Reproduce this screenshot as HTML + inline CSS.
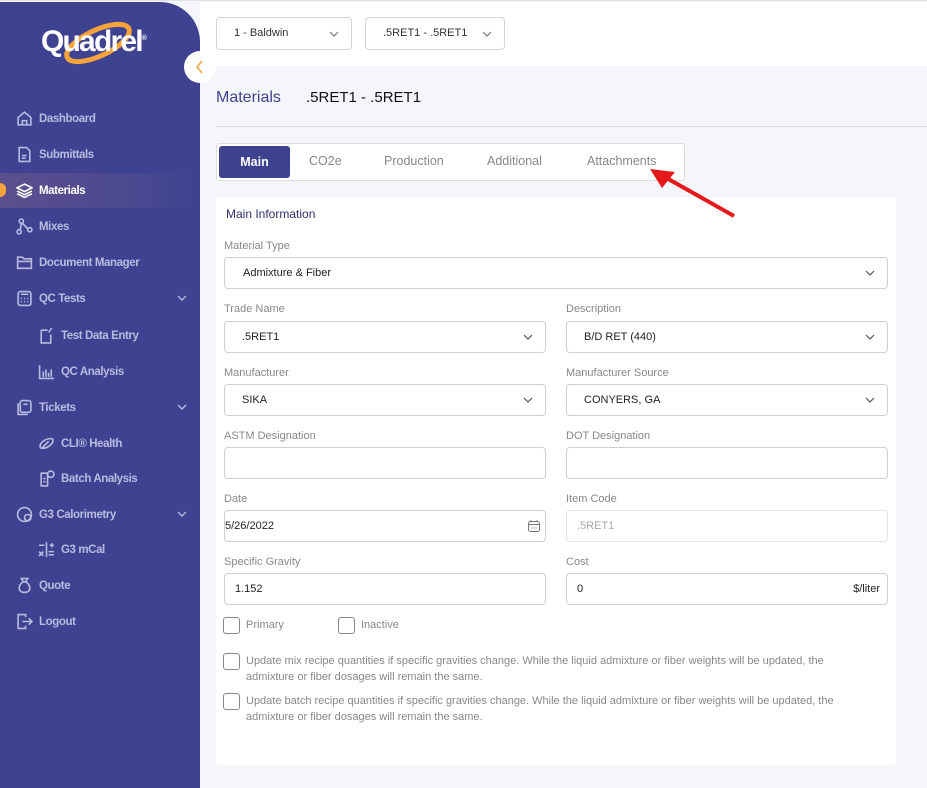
<!DOCTYPE html>
<html><head><meta charset="utf-8"><style>
*{box-sizing:border-box;margin:0;padding:0}
body{width:927px;height:786px;overflow:hidden;background:#f4f6f9;font-family:"Liberation Sans",sans-serif;position:relative;border-top:1px solid #e2e2e2}
.sb{position:absolute;left:0;top:1px;width:200px;height:786px;background:#3e4291;border-top-right-radius:40px}
.abs{position:absolute}
.nav{position:absolute;left:16px;color:#b9bbe0;font-size:11.5px;font-weight:bold;letter-spacing:-.4px;display:flex;align-items:center;gap:6px}
.nav svg{width:17px;height:17px;stroke:#b9bbe0;fill:none;stroke-width:1.5}
.sub{left:38px}
.chev{position:absolute;left:177px;width:10px;height:6px}
.top{position:absolute;left:200px;top:1px;width:727px;height:64px;background:#fff}
.dd{position:absolute;top:16px;height:33px;border:1px solid #d4d4d4;border-radius:4px;background:#fff;font-size:11px;color:#333;padding:9px 0 0 17px}
.card{position:absolute;left:216px;top:196px;width:680px;height:568px;background:#fff;border-radius:4px}
.lbl{position:absolute;font-size:11px;color:#888}
.inp{position:absolute;height:32px;border:1px solid #cfcfcf;border-radius:4px;background:#fff;font-size:11px;color:#222;padding:9px 0 0 17px}
.ca{position:absolute;right:12px;top:12px;width:10px;height:6px}
.cb{position:absolute;width:17px;height:17px;border:1.3px solid #888;border-radius:3px}
.ct{position:absolute;font-size:11px;color:#888;line-height:16px}
</style></head><body>
<div class="sb"></div>
<svg class="abs" style="left:58px;top:12px" width="80" height="60" viewBox="0 0 80 60"><ellipse cx="40" cy="30" rx="34" ry="13" transform="rotate(-25 40 30)" fill="none" stroke="#f5a33a" stroke-width="5"/></svg>
<div class="abs" style="left:41px;top:24px;font-size:30px;font-weight:bold;color:#fff;letter-spacing:-1.8px">Quadrel<sup style="font-size:7px;letter-spacing:0">®</sup></div>
<div class="abs" style="left:184px;top:50px;width:32px;height:32px;border-radius:50%;background:#fff;z-index:3"><svg width="32" height="32"><path d="M18 10 L13 16 L18 22" fill="none" stroke="#f5a33a" stroke-width="1.5"/></svg></div>
<div class="abs" style="left:0;top:172px;width:200px;height:35px;background:linear-gradient(90deg,#5b4f8e,#4a4890 70%,#3e4291)"></div>
<div class="abs" style="left:-6px;top:182px;width:12px;height:14px;border-radius:6px;background:#f5a33a"></div>
<div class="nav" style="top:109px"><svg viewBox="0 0 16 16"><path d="M2 7 L8 2 L14 7 V14 H2Z M6 14 V10 H10 V14"/></svg>Dashboard</div>
<div class="nav" style="top:145px"><svg viewBox="0 0 16 16"><path d="M3 1.5 H10 L13 4.5 V14.5 H3Z M5.5 9 H10 M5.5 11.5 H9"/></svg>Submittals</div>
<div class="nav" style="top:181px;color:#fff"><svg viewBox="0 0 16 16" style="stroke:#fff"><path d="M8 2 L15 5.5 L8 9 L1 5.5Z M1 8.5 L8 12 L15 8.5 M1 11 L8 14.5 L15 11"/></svg>Materials</div>
<div class="nav" style="top:217px"><svg viewBox="0 0 16 16"><circle cx="5" cy="3" r="2"/><circle cx="3" cy="13" r="2"/><circle cx="13" cy="11" r="2"/><path d="M5 5 L4 11 M6 5 L11 10"/></svg>Mixes</div>
<div class="nav" style="top:253px"><svg viewBox="0 0 16 16"><path d="M1.5 3 H6 L7.5 4.5 H14.5 V13.5 H1.5Z M1.5 7 H14.5"/></svg>Document Manager</div>
<div class="nav" style="top:289px"><svg viewBox="0 0 16 16"><rect x="2" y="1.5" width="12" height="13" rx="2"/><path d="M4.5 4 H11.5 M4.5 8 h1 M7.5 8 h1 M10.5 8 h1 M4.5 11 h1 M7.5 11 h1 M10.5 11 h1"/></svg>QC Tests</div>
<svg class="chev" style="top:294px"><path d="M1 1 L5 5 L9 1" fill="none" stroke="#b9bbe0" stroke-width="1.4"/></svg>
<div class="nav sub" style="top:326px"><svg viewBox="0 0 16 16"><path d="M3 3 H9 M3 3 V15 H12 V7 M13 1 L10 5"/></svg>Test Data Entry</div>
<div class="nav sub" style="top:362px"><svg viewBox="0 0 16 16"><path d="M1.5 2 V14.5 H15 M5 13 V8 M7.5 13 V6 M10 13 V9 M12.5 13 V6"/></svg>QC Analysis</div>
<div class="nav" style="top:398px"><svg viewBox="0 0 16 16"><rect x="4" y="1.5" width="10" height="11" rx="2"/><path d="M2 4 V14.5 H11 M7 5 H11"/></svg>Tickets</div>
<svg class="chev" style="top:403px"><path d="M1 1 L5 5 L9 1" fill="none" stroke="#b9bbe0" stroke-width="1.4"/></svg>
<div class="nav sub" style="top:434px"><svg viewBox="0 0 16 16"><path d="M2 12 C1 6 10 2 14 4 C15 9 7 14 2 12 M4 12 L10 6"/></svg>CLI® Health</div>
<div class="nav sub" style="top:469px"><svg viewBox="0 0 16 16"><path d="M3 3 H9 V15 H3Z M5 8 H7 M5 11 H7"/><circle cx="12" cy="4" r="3"/></svg>Batch Analysis</div>
<div class="nav" style="top:505px"><svg viewBox="0 0 16 16"><circle cx="8" cy="8" r="6.5"/><circle cx="11" cy="11" r="3"/></svg>G3 Calorimetry</div>
<svg class="chev" style="top:510px"><path d="M1 1 L5 5 L9 1" fill="none" stroke="#b9bbe0" stroke-width="1.4"/></svg>
<div class="nav sub" style="top:540px"><svg viewBox="0 0 16 16"><path d="M1 4 H6 M11 4 H15 M13 2 V6 M8 1 V15 M1 10 L5 14 M5 10 L1 14 M10 10 H15 M10 13 H15"/></svg>G3 mCal</div>
<div class="nav" style="top:576px"><svg viewBox="0 0 16 16"><path d="M5 1.5 H11 L9 4.5 H7Z M7 4.5 C2 7 1 14.5 8 14.5 C15 14.5 14 7 9 4.5"/></svg>Quote</div>
<div class="nav" style="top:612px"><svg viewBox="0 0 16 16"><path d="M9 4 V1.5 H2 V14.5 H9 V12 M6 8 H15 M12 5 L15 8 L12 11"/></svg>Logout</div>

<div class="top"></div>
<div class="dd" style="left:216px;width:136px">1 - Baldwin<svg class="ca" style="top:13px"><path d="M1 1 L5 5 L9 1" fill="none" stroke="#777" stroke-width="1.2"/></svg></div>
<div class="dd" style="left:365px;width:140px">.5RET1 - .5RET1<svg class="ca" style="top:13px"><path d="M1 1 L5 5 L9 1" fill="none" stroke="#777" stroke-width="1.2"/></svg></div>
<div class="abs" style="left:216px;top:88px;font-size:16px;color:#3e4291">Materials</div>
<div class="abs" style="left:306px;top:88px;font-size:15px;color:#111">.5RET1 - .5RET1</div>
<div class="abs" style="left:216px;top:125px;width:711px;height:1px;background:#ddd"></div>
<div class="abs" style="left:216px;top:142px;width:469px;height:38px;border:1px solid #ddd;border-radius:3px;background:#fff"></div>
<div class="abs" style="left:219px;top:145px;width:71px;height:32px;background:#3e4291;border-radius:3px;color:#fff;font-size:12.5px;font-weight:bold;text-align:center;line-height:32px">Main</div>
<div class="abs" style="top:153px;left:309px;font-size:12.5px;color:#888">CO2e</div>
<div class="abs" style="top:153px;left:384px;font-size:12.5px;color:#888">Production</div>
<div class="abs" style="top:153px;left:487px;font-size:12.5px;color:#888">Additional</div>
<div class="abs" style="top:153px;left:587px;font-size:12.5px;color:#888">Attachments</div>
<svg class="abs" style="left:645px;top:162px;z-index:4" width="100" height="62"><path d="M89 53 L18 13" stroke="#e3191b" stroke-width="4"/><path d="M5 6 L30 9 L17 25Z" fill="#e3191b"/></svg>

<div class="card">
<div class="abs" style="left:10px;top:10px;font-size:12px;color:#2c2f6b">Main Information</div>
<div class="lbl" style="left:8px;top:43px">Material Type</div>
<div class="inp" style="left:8px;top:60px;width:664px;padding-left:18px">Admixture &amp; Fiber<svg class="ca"><path d="M1 1 L5 5 L9 1" fill="none" stroke="#555" stroke-width="1.2"/></svg></div>
<div class="lbl" style="left:8px;top:106px">Trade Name</div>
<div class="inp" style="left:8px;top:124px;width:322px">.5RET1<svg class="ca"><path d="M1 1 L5 5 L9 1" fill="none" stroke="#555" stroke-width="1.2"/></svg></div>
<div class="lbl" style="left:350px;top:106px">Description</div>
<div class="inp" style="left:350px;top:124px;width:322px">B/D RET (440)<svg class="ca"><path d="M1 1 L5 5 L9 1" fill="none" stroke="#555" stroke-width="1.2"/></svg></div>
<div class="lbl" style="left:8px;top:170px">Manufacturer</div>
<div class="inp" style="left:8px;top:187px;width:322px">SIKA<svg class="ca"><path d="M1 1 L5 5 L9 1" fill="none" stroke="#555" stroke-width="1.2"/></svg></div>
<div class="lbl" style="left:350px;top:170px">Manufacturer Source</div>
<div class="inp" style="left:350px;top:187px;width:322px">CONYERS, GA<svg class="ca"><path d="M1 1 L5 5 L9 1" fill="none" stroke="#555" stroke-width="1.2"/></svg></div>
<div class="lbl" style="left:8px;top:233px">ASTM Designation</div>
<div class="inp" style="left:8px;top:250px;width:322px"></div>
<div class="lbl" style="left:350px;top:233px">DOT Designation</div>
<div class="inp" style="left:350px;top:250px;width:322px"></div>
<div class="lbl" style="left:8px;top:296px">Date</div>
<div class="inp" style="left:8px;top:313px;width:322px;padding-left:0">5/26/2022<svg class="abs" style="right:4px;top:8px" width="14" height="14"><rect x="1.5" y="2.5" width="11" height="10" rx="2" fill="none" stroke="#777"/><path d="M1.5 5.5 H12.5 M4 1 V3 M10 1 V3 M4.5 9 h1 M6.5 9 h1 M8.5 9 h1" stroke="#777"/></svg></div>
<div class="lbl" style="left:350px;top:296px">Item Code</div>
<div class="inp" style="left:350px;top:313px;width:322px;border-color:#e3e3e3;color:#aaa;padding-left:10px">.5RET1</div>
<div class="lbl" style="left:8px;top:359px">Specific Gravity</div>
<div class="inp" style="left:8px;top:376px;width:322px;padding-left:10px">1.152</div>
<div class="lbl" style="left:350px;top:359px">Cost</div>
<div class="inp" style="left:350px;top:376px;width:322px;padding-left:10px">0<span style="position:absolute;right:7px;top:9px">$/liter</span></div>
<div class="cb" style="left:7px;top:420px"></div><div class="ct" style="left:30px;top:420px">Primary</div>
<div class="cb" style="left:122px;top:420px"></div><div class="ct" style="left:145px;top:420px">Inactive</div>
<div class="cb" style="left:7px;top:456px"></div><div class="ct" style="left:30px;top:456px;width:625px">Update mix recipe quantities if specific gravities change. While the liquid admixture or fiber weights will be updated, the admixture or fiber dosages will remain the same.</div>
<div class="cb" style="left:7px;top:496px"></div><div class="ct" style="left:30px;top:496px;width:625px">Update batch recipe quantities if specific gravities change. While the liquid admixture or fiber weights will be updated, the admixture or fiber dosages will remain the same.</div>
</div>
</body></html>
